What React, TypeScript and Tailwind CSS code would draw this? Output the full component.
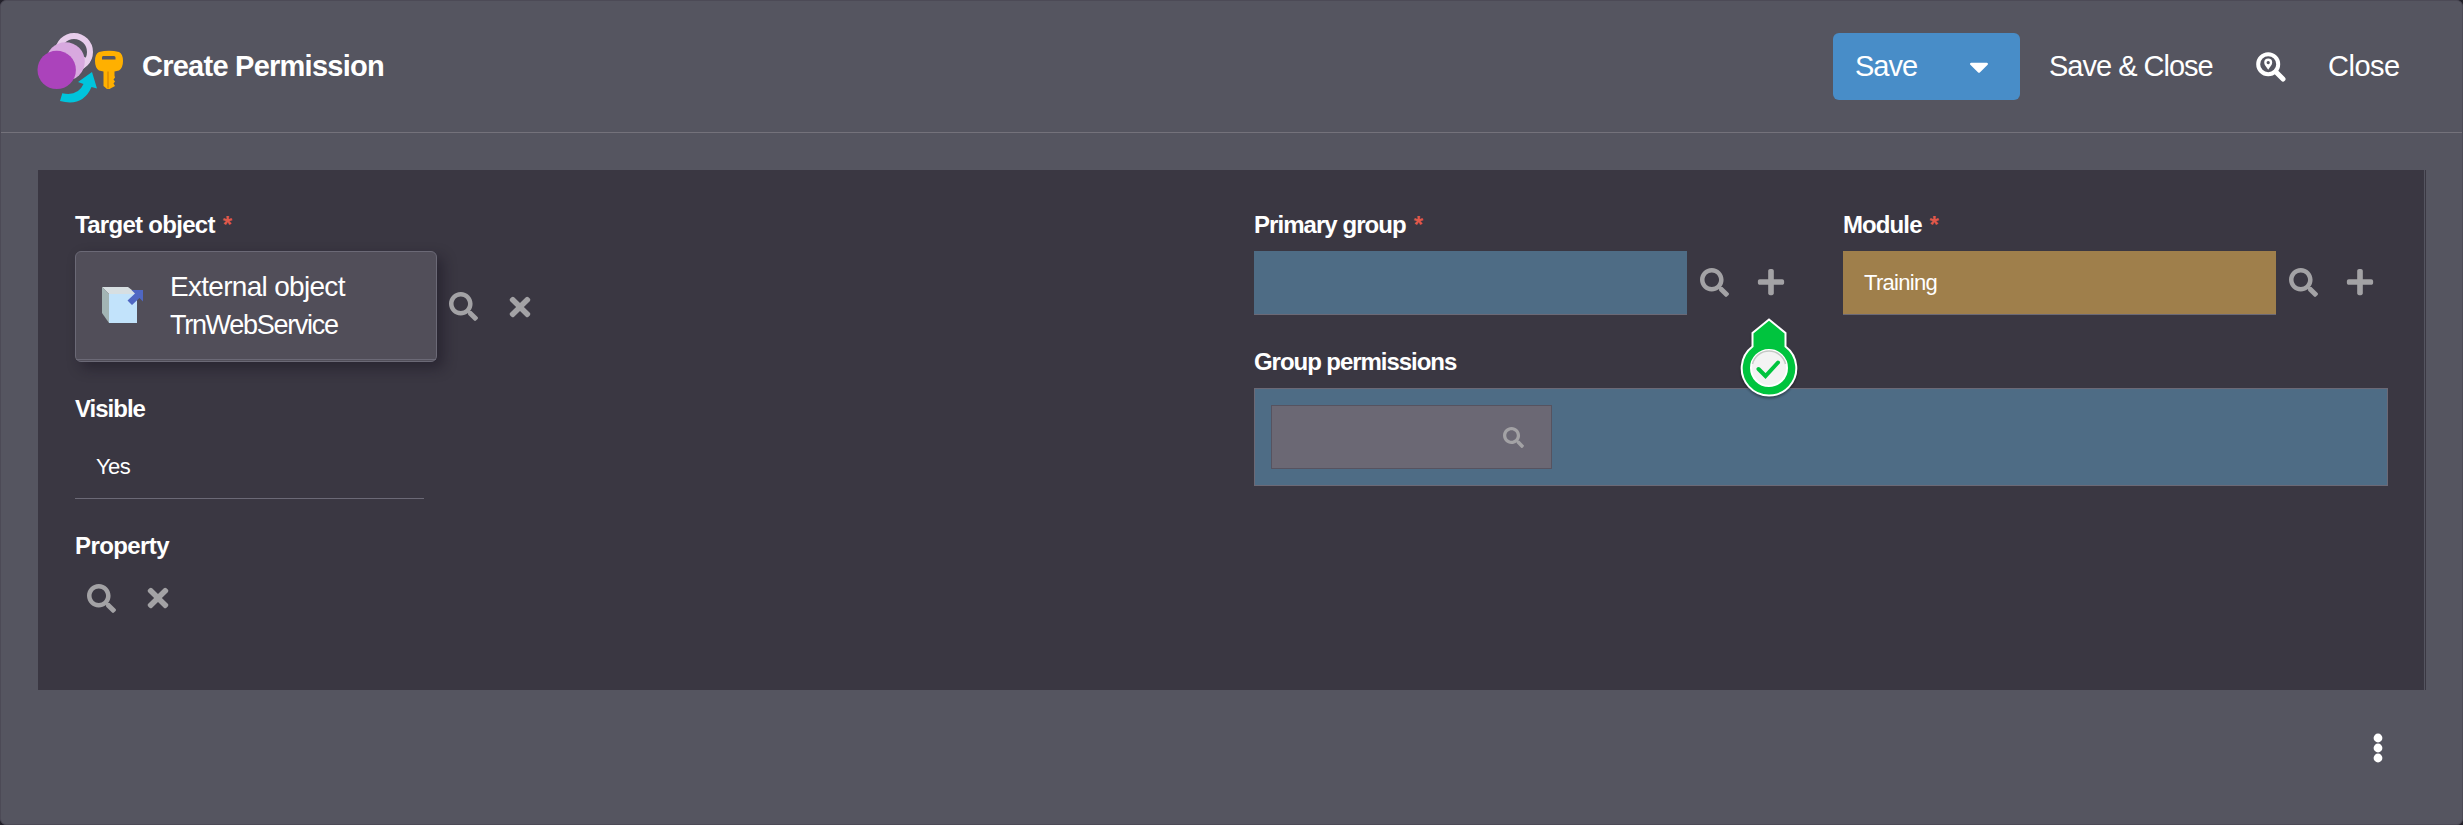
import React from "react";
import { FaSearch, FaTimes, FaPlus, FaCaretDown } from "react-icons/fa";

function Label({ children, required, spacing }: { children: React.ReactNode; required?: boolean; spacing: string }) {
  return (
    <div className="flex h-[32px] items-center gap-[8px] pt-[1px] text-[24px] leading-[32px] font-bold text-white">
      <span className={`whitespace-nowrap ${spacing}`}>{children}</span>
      {required && <span className="text-[#e0584a]">*</span>}
    </div>
  );
}

function PermissionLogo() {
  return (
    <svg className="mt-[2px] h-[72px] w-[88px] shrink-0" viewBox="37 32 88 72">
      <circle cx="74" cy="52" r="16" fill="none" stroke="#e7cdeb" strokeWidth="6" />
      <path d="M91 60 L75 78 L70 66 L82 56 Z" fill="#e7cdeb" />
      <circle cx="65.500" cy="61.500" r="19.300" fill="#d8a9df" />
      <path d="M84 66 L74 78 L66 70 Z" fill="#d8a9df" />
      <circle cx="56.700" cy="69.900" r="19.200" fill="#ab43bb" />
      <path d="M62.300 93.300 L60 101 Q83 107 91.500 87 L97 88.500 L92 72 L78 82 L83.500 84 Q78 96.500 62.300 93.300 Z" fill="#00c4dc" />
      <path
        fillRule="evenodd"
        d="M99 52 Q109 49.500 119 52 Q123 54 123 61 Q123 68 119 70.500 L114.500 71.500 V75.500 L115 77.500 L113.500 79.500 L115 81.500 L113.500 83.500 L115 86 L109.500 89 H107 L103.500 86 V71.500 L99 70.500 Q95 68 95 61 Q95 54 99 52 Z M103 56 Q102 56 102 57.500 V59.500 H115.500 V57.500 Q115.500 56 114 56 Z"
        fill="#ffb000"
      />
      <path d="M108 71.500 V88.500" stroke="#dd8d00" strokeWidth="1.500" />
    </svg>
  );
}

function SearchPin() {
  return (
    <svg className="h-[30px] w-[30px]" viewBox="0 0 30 30" fill="none" stroke="white">
      <circle cx="12.200" cy="12.200" r="10" strokeWidth="4" />
      <path d="M20 20 L27 27" strokeWidth="5" strokeLinecap="round" />
      <path d="M12.200 17.800 C10 14.500 8.200 12.800 8.200 10.500 A4 4 0 0 1 16.200 10.500 C16.200 12.800 14.400 14.500 12.200 17.800 Z M12.200 9 a1.600 1.600 0 1 0 .01 0 Z" fill="white" fillRule="evenodd" stroke="none" />
    </svg>
  );
}

function CubeIcon() {
  return (
    <svg className="mb-[2px] h-[38px] w-[42px] shrink-0" viewBox="102 286 42 38">
      <path d="M102 287 H128 L137 294 H109 Z" fill="#d7dfe2" />
      <path d="M102 287 L109 294 V323 L102 313 Z" fill="#a2b4b4" />
      <path d="M109 294 H137 V323 H109 Z" fill="#c2e3fb" />
      <path d="M131.500 290 H143 V301.500 L139.500 298 L132 305 L127.500 300.500 L135 293.500 Z" fill="#4f67c3" />
    </svg>
  );
}

function Marker() {
  return (
    <svg className="absolute top-[49px] left-[-19px] h-[86px] w-[64px]" viewBox="1737 316 64 86">
      <path
        d="M1769 319.500 L1785.500 333 V346.500 A27.300 27.300 0 1 1 1752.500 346.500 V333 Z"
        fill="#00c43e"
        stroke="white"
        strokeWidth="2"
        className="drop-shadow-[0_2px_1px_rgba(0,0,0,0.35)]"
      />
      <circle cx="1769" cy="368" r="18" fill="#f3f3f3" stroke="white" strokeWidth="2" />
      <path d="M1752.500 364 A17 17 0 0 1 1785.500 364" fill="none" stroke="#c4c8c5" strokeWidth="1.500" />
      <path d="M1758.500 369 L1765.500 376 L1778 362.500" fill="none" stroke="#00c43e" strokeWidth="4" strokeLinecap="round" />
    </svg>
  );
}

export default function App() {
  return (
    <div className="h-[825px] w-[2463px] bg-[#23212b] font-['Liberation_Sans',Arial,sans-serif] text-white">
      <div className="flex h-full flex-col rounded-[6px] border border-[#4c4a56] bg-[#555560]">
        <header className="flex h-[132px] shrink-0 items-center border-b border-[#74727b] pr-[61px] pl-[36px]">
          <PermissionLogo />
          <h1 className="ml-[17px] text-[29px] font-bold tracking-[-0.75px]">Create Permission</h1>
          <div className="ml-auto flex items-center text-[29px]">
            <div className="flex h-[67px] w-[187px] items-center justify-between rounded-[6px] bg-[#488dc8] pr-[28px] pl-[22px]">
              <span className="tracking-[-1px]">Save</span>
              <FaCaretDown className="h-[31px] w-[26px]" />
            </div>
            <span className="ml-[29px] w-[166px] tracking-[-1px] whitespace-nowrap">Save &amp; Close</span>
            <div className="ml-[41px]"><SearchPin /></div>
            <span className="ml-[42px] w-[73px] tracking-[-0.5px]">Close</span>
          </div>
        </header>
        <main className="mt-[37px] ml-[37px] flex h-[520px] w-[2388px] shrink-0 border-r border-[#3a3742]">
          <div className="flex w-[2386px] bg-[#3a3742] pt-[38px] pl-[37px] text-[#a3a2a5]">
            <section className="w-[1179px]">
              <Label required spacing="tracking-[-0.7px]">Target object</Label>
              <div className="mt-[11px] flex items-center">
                <div className="h-[111px] w-[362px] rounded-[6px] border border-[#6b6976] bg-[#514e59] shadow-[6px_6px_14px_rgba(20,16,28,0.45)]">
                  <div className="flex h-[108px] items-center border-b border-[#6b6976] pl-[26px] text-[28px] leading-[39px] text-white">
                    <CubeIcon />
                    <div className="ml-[26px]">
                      <div className="tracking-[-0.7px]">External object</div>
                      <div className="text-[27px] tracking-[-1.3px]">TrnWebService</div>
                    </div>
                  </div>
                </div>
                <FaSearch className="ml-[12px] size-[29px]" />
                <FaTimes className="ml-[27px] size-[30px]" />
              </div>
              <div className="mt-[30px]"><Label spacing="tracking-[-1px]">Visible</Label></div>
              <div className="mt-[10px] flex h-[65px] w-[349px] items-center border-b border-[#6b6976] pl-[21px] text-[22px] tracking-[-0.6px] text-white">Yes</div>
              <div className="mt-[30px]"><Label spacing="tracking-[-0.6px]">Property</Label></div>
              <div className="mt-[22px] flex items-center pl-[12px]">
                <FaSearch className="size-[29px]" />
                <FaTimes className="ml-[27px] size-[30px]" />
              </div>
            </section>
            <section className="w-[1134px]">
              <div className="flex">
                <div className="w-[589px]">
                  <Label required spacing="tracking-[-0.95px]">Primary group</Label>
                  <div className="mt-[11px] flex items-center">
                    <div className="h-[64px] w-[433px] border-b border-[#6b6976] bg-[#4e6c85]" />
                    <FaSearch className="mb-[2px] ml-[13px] size-[29px]" />
                    <div className="relative mb-[2px] ml-[27px]">
                      <FaPlus className="size-[30px]" />
                      <Marker />
                    </div>
                  </div>
                </div>
                <div>
                  <Label required spacing="tracking-[-0.9px]">Module</Label>
                  <div className="mt-[11px] flex items-center">
                    <div className="flex h-[64px] w-[433px] items-center border-b border-[#6b6976] bg-[#9f7f4b] pl-[21px] text-[22px] tracking-[-0.7px] text-white">Training</div>
                    <FaSearch className="mb-[2px] ml-[13px] size-[29px]" />
                    <FaPlus className="mb-[2px] ml-[27px] size-[30px]" />
                  </div>
                </div>
              </div>
              <div className="mt-[30px]"><Label spacing="tracking-[-1.05px]">Group permissions</Label></div>
              <div className="mt-[11px] h-[98px] border border-[#6b6976] bg-[#4e6c85] p-[16px]">
                <div className="flex h-[64px] w-[281px] items-center justify-end border border-[#565360] bg-[#6b6874] pr-[27px]">
                  <FaSearch className="size-[21px]" />
                </div>
              </div>
            </section>
          </div>
        </main>
        <footer className="mt-[43px] flex justify-end pr-[79px]">
          <svg className="h-[32px] w-[10px]" viewBox="0 0 10 32" fill="white">
            <circle cx="5" cy="5" r="4.400" />
            <circle cx="5" cy="15" r="4.400" />
            <circle cx="5" cy="25" r="4.400" />
          </svg>
        </footer>
      </div>
    </div>
  );
}
